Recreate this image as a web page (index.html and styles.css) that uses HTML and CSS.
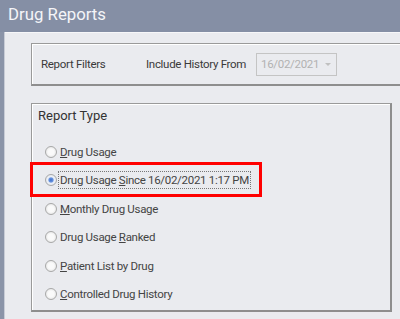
FILE: index.html
```html
<!DOCTYPE html>
<html lang="en">
<head>
    <meta charset="UTF-8">
    <title>Drug Reports</title>
    <link rel="stylesheet" href="styles.css">
</head>
<body>
    <div class="title-bar">Drug Reports</div>
    <div class="window">
        <div class="side-strip"></div>
        <div class="content">
            <div class="filters">
                <span class="filter-label">Report Filters</span>
                <span class="history-label">Include History From</span>
                <div class="date-box">
                    <span>16/02/2021</span>
                    <span class="arrow"></span>
                </div>
            </div>

            <div class="report-type">
                <h3>Report Type</h3>
                <div class="options">
                    <label class="option"><span class="radio"></span><span class="text"><u>D</u>rug Usage</span></label>
                    <label class="option selected"><span class="radio"></span><span class="text focus">Drug Usage <u>S</u>ince 16/02/2021 1:17 PM</span></label>
                    <label class="option"><span class="radio"></span><span class="text"><u>M</u>onthly Drug Usage</span></label>
                    <label class="option"><span class="radio"></span><span class="text">Drug Usage <u>R</u>anked</span></label>
                    <label class="option"><span class="radio"></span><span class="text"><u>P</u>atient List by Drug</span></label>
                    <label class="option"><span class="radio"></span><span class="text"><u>C</u>ontrolled Drug History</span></label>
                </div>
                <div class="highlight"></div>
            </div>
        </div>
    </div>
</body>
</html>
```

FILE: styles.css
```css
* {
    margin: 0;
    padding: 0;
    box-sizing: border-box;
}

body {
    width: 400px;
    height: 319px;
    overflow: hidden;
    background-color: #eaebef;
    font-family: Roboto, "Open Sans", sans-serif;
    color: #3a3a3a;
}

.title-bar {
    height: 32px;
    background-color: #858fa5;
    color: #f4f5f8;
    font-size: 16.8px;
    padding-left: 8px;
    line-height: 29px;
}

.window {
    display: flex;
    height: 287px;
}

.side-strip {
    width: 5px;
    background-color: #8b94a8;
    border-right: 1px solid #c8ccd6;
}

.content {
    flex: 1;
    border-top: 1px solid #f7f7f9;
    padding: 10px 0 0 26px;
}

.filters {
    display: flex;
    align-items: center;
    height: 43px;
    border: 1px solid #9a9a9a;
    border-right: none;
    border-bottom: 2px solid #8e8e8e;
    box-shadow: inset 1px 1px 0 #ffffff;
    padding-left: 9px;
    font-size: 11.5px;
    letter-spacing: -0.3px;
    white-space: nowrap;
}

.filter-label {
    width: 105px;
}

.history-label {
    width: 110px;
}

.date-box {
    display: flex;
    align-items: center;
    justify-content: space-between;
    width: 81px;
    height: 23px;
    border: 1px solid #c4c4c4;
    padding: 0 5px 0 4px;
    color: #b2b2b2;
}

.arrow {
    width: 0;
    height: 0;
    border-left: 3px solid transparent;
    border-right: 3px solid transparent;
    border-top: 3px solid #c0c0c0;
}

.report-type {
    position: relative;
    width: 361px;
    height: 209px;
    margin-top: 17px;
    border: 1px solid #9a9a9a;
    border-right: 2px solid #8e8e8e;
    border-bottom: 2px solid #8e8e8e;
    box-shadow: inset 1px 1px 0 #ffffff;
    padding: 4px 0 0 6px;
}

.report-type h3 {
    font-size: 13px;
    font-weight: normal;
    color: #333;
}

.options {
    display: flex;
    flex-direction: column;
    gap: 9px;
    padding: 19px 0 0 7px;
}

.option {
    display: flex;
    align-items: center;
    height: 19.5px;
    font-size: 11.5px;
    letter-spacing: -0.3px;
    color: #444;
    white-space: nowrap;
}

.option u {
    text-decoration-thickness: 1px;
}

.radio {
    width: 12px;
    height: 12px;
    border-radius: 50%;
    border: 1px solid #a8a8a8;
    background: radial-gradient(circle, #fafafa 40%, #dcdcdc 100%);
    margin-right: 3px;
    flex-shrink: 0;
}

.selected .radio {
    background: radial-gradient(circle, #3d6fc9 0, #6a93de 30%, #eef2f8 45%, #dadde4 100%);
}

.focus {
    outline: 1px dotted #777;
    outline-offset: 1px;
}

.highlight {
    position: absolute;
    left: -2px;
    top: 58px;
    width: 232px;
    height: 35px;
    border: 3px solid #ff0000;
}
```
